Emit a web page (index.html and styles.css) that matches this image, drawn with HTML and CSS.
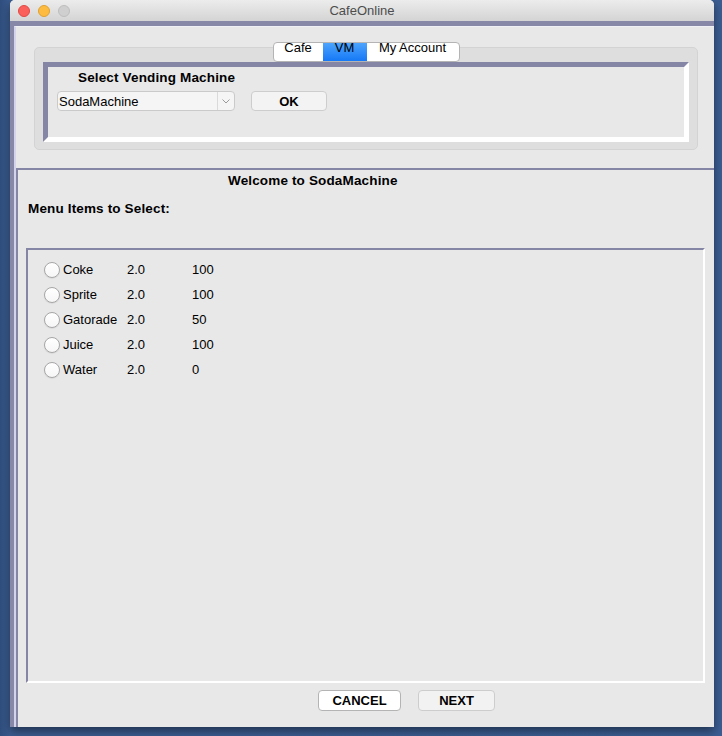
FILE: index.html
```html
<!DOCTYPE html>
<html>
<head>
<meta charset="utf-8">
<title>CafeOnline</title>
<link rel="stylesheet" href="styles.css">
</head>
<body>
<div class="window">
  <div class="titlebar">
    <div class="lights">
      <span class="light red"></span>
      <span class="light yellow"></span>
      <span class="light grey"></span>
    </div>
    <div class="title">CafeOnline</div>
  </div>
  <div class="frame">
    <div class="frame-inner">
      <div class="top-section">
        <div class="tabpane">
          <div class="tabs">
            <div class="tab tab-cafe"><span class="tab-text">Cafe</span></div>
            <div class="tab tab-vm active"><span class="tab-text">VM</span></div>
            <div class="tab tab-acct"><span class="tab-text">My Account</span></div>
          </div>
          <div class="tabbox">
            <div class="bevel">
              <div class="bold-label select-label">Select Vending Machine</div>
              <div class="select-row">
                <div class="combo">
                  <span class="combo-text">SodaMachine</span>
                  <span class="combo-arrow">
                    <svg width="8" height="5" viewBox="0 0 8 5"><path d="M0.5 0.5 L4 4 L7.5 0.5" fill="none" stroke="#9a9a9a" stroke-width="1"/></svg>
                  </span>
                </div>
                <div class="btn ok-btn">OK</div>
              </div>
            </div>
          </div>
        </div>
      </div>
      <div class="lower">
        <div class="bold-label welcome">Welcome to SodaMachine</div>
        <div class="bold-label menu-label">Menu Items to Select:</div>
        <div class="list">
          <div class="row"><span class="radio"></span><span>Coke</span><span>2.0</span><span>100</span></div>
          <div class="row"><span class="radio"></span><span>Sprite</span><span>2.0</span><span>100</span></div>
          <div class="row"><span class="radio"></span><span>Gatorade</span><span>2.0</span><span>50</span></div>
          <div class="row"><span class="radio"></span><span>Juice</span><span>2.0</span><span>100</span></div>
          <div class="row"><span class="radio"></span><span>Water</span><span>2.0</span><span>0</span></div>
        </div>
        <div class="actions">
          <div class="btn cancel-btn">CANCEL</div>
          <div class="btn next-btn">NEXT</div>
        </div>
      </div>
    </div>
  </div>
</div>
</body>
</html>
```

FILE: styles.css
```css
* { box-sizing: border-box; }

html, body {
  margin: 0;
  padding: 0;
  width: 722px;
  height: 736px;
  overflow: hidden;
}

body {
  background: linear-gradient(90deg, #2f4e7e 0px, #3b5c90 10px, #3b5d92 100%);
  font-family: "Liberation Sans", Arial, sans-serif;
  font-size: 13px;
  color: #000;
}

.window {
  margin-left: 10px;
  width: 704px;
  height: 727px;
  display: flex;
  flex-direction: column;
  border-radius: 5px 5px 0 0;
  overflow: hidden;
  background: #e8e8e8;
  box-shadow: 0 4px 10px rgba(0, 0, 0, 0.45);
}

.titlebar {
  height: 21px;
  flex: none;
  display: flex;
  align-items: center;
  background: linear-gradient(#ececec, #d4d4d4);
  position: relative;
}

.lights {
  display: flex;
  gap: 8px;
  padding-left: 8px;
  padding-top: 1px;
}

.light {
  width: 12px;
  height: 12px;
  border-radius: 50%;
  display: block;
}

.red { background: #fc605b; border: 1px solid #de4a45; }
.yellow { background: #fdbc3f; border: 1px solid #dea034; }
.grey { background: #cfcfcf; border: 1px solid #bdbdbd; }

.title {
  position: absolute;
  left: 0;
  right: 0;
  top: 3px;
  text-align: center;
  color: #4d4d4d;
  font-size: 13px;
  line-height: 16px;
}

.frame {
  flex: 1;
  display: flex;
  border-top: 5px solid #8787a7;
  border-left: 4px solid #8787a7;
}

.frame-inner {
  flex: 1;
  display: flex;
  flex-direction: column;
  border-left: 2px solid #d3d3ec;
  border-top: 1px solid #efeff6;
}

.top-section {
  height: 141px;
  flex: none;
}

.tabpane {
  display: flex;
  flex-direction: column;
  align-items: center;
  margin: 15px 16px 0 18px;
}

.tabs {
  display: flex;
  height: 20px;
  position: relative;
  z-index: 1;
  margin-bottom: -15px;
  border: 1px solid #b4b4b4;
  border-radius: 4px;
  background: #fff;
}

.tab {
  text-align: center;
  font-size: 13px;
}

.tab-text {
  display: block;
  line-height: 16px;
  margin-top: -3px;
}

.tab-cafe { width: 49px; border-radius: 3px 0 0 3px; }
.tab-vm { width: 44px; }
.tab-acct { width: 92px; border-radius: 0 3px 3px 0; }

.tab.active {
  background: linear-gradient(#4ca4fd, #1578f6);
}

.tabbox {
  width: 664px;
  height: 103px;
  background: #dedede;
  border: 1px solid #d3d3d3;
  border-radius: 5px;
  padding: 14px 8px 7px 8px;
}

.bevel {
  height: 80px;
  border: 5px solid;
  border-color: #8585a5 #ffffff #ffffff #8585a5;
  background: #e8e8e8;
  padding: 3px 0 0 9px;
}

.bold-label {
  font-weight: bold;
  font-size: 13.5px;
  letter-spacing: 0.15px;
  line-height: 16px;
}

.select-label {
  margin-left: 21px;
}

.select-row {
  display: flex;
  margin-top: 5px;
}

.combo {
  width: 178px;
  height: 20px;
  display: flex;
  border: 1px solid #cacaca;
  border-radius: 4px;
  background: #f5f5f5;
}

.combo-text {
  flex: 1;
  padding-left: 1px;
  line-height: 19px;
}

.combo-arrow {
  width: 17px;
  border-left: 1px solid #dadada;
  display: flex;
  align-items: center;
  justify-content: center;
}

.btn {
  height: 20px;
  border: 1px solid #cdcdcd;
  border-radius: 4px;
  background: #f3f3f3;
  font-weight: bold;
  font-size: 13px;
  display: flex;
  align-items: center;
  justify-content: center;
}

.ok-btn {
  width: 76px;
  margin-left: 16px;
}

.lower {
  flex: 1;
  display: flex;
  flex-direction: column;
  border-top: 2px solid #8585a5;
  border-left: 2px solid #8585a5;
}

.welcome {
  margin: 3px 0 0 210px;
}

.menu-label {
  margin: 12px 0 0 10px;
}

.list {
  margin: 31px 9px 0 8px;
  height: 435px;
  border: 2px solid;
  border-color: #8585a5 #ffffff #ffffff #8585a5;
  padding: 7px 0 0 16px;
}

.row {
  display: grid;
  grid-template-columns: 19px 64px 65px auto;
  height: 25px;
  align-items: center;
  font-size: 13px;
}

.radio {
  width: 16px;
  height: 16px;
  border-radius: 50%;
  border: 1px solid #a6a6a6;
  background: linear-gradient(#ffffff, #f6f6f6);
  box-shadow: 0 0.5px 1px rgba(0, 0, 0, 0.12);
  display: block;
  margin-top: 1px;
}

.actions {
  display: flex;
  margin-top: 7px;
  padding-left: 300px;
}

.actions .btn {
  height: 21px;
}

.cancel-btn {
  width: 83px;
  background: #ffffff;
  border-color: #b4b4b4;
}

.next-btn {
  width: 77px;
  margin-left: 17px;
  background: #f2f2f2;
}
```
